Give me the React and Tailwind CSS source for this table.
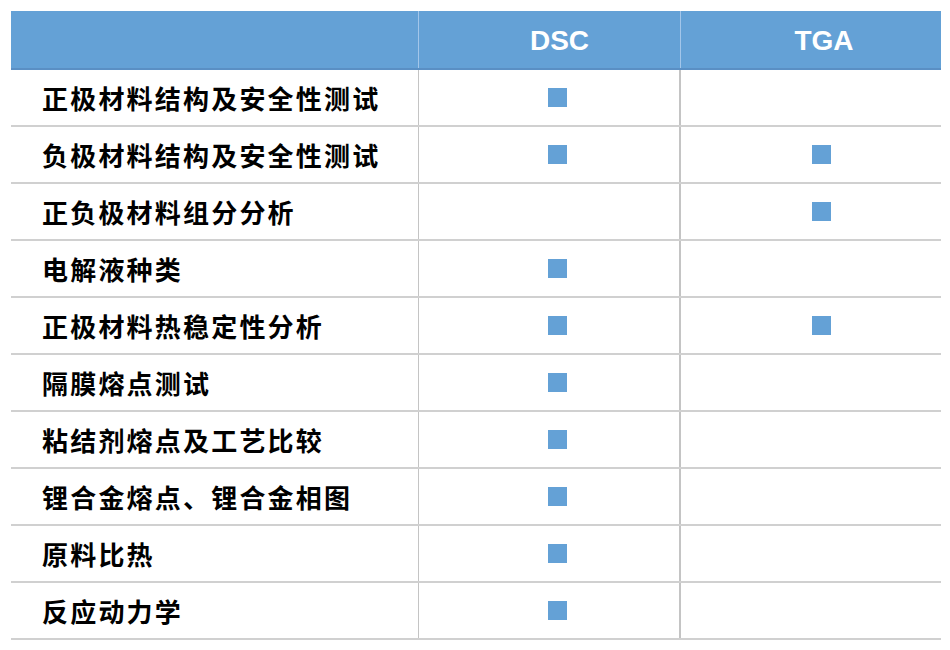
import React from "react";

const rows = [
  ["正极材料结构及安全性测试", true, false],
  ["负极材料结构及安全性测试", true, true],
  ["正负极材料组分分析", false, true],
  ["电解液种类", true, false],
  ["正极材料热稳定性分析", true, true],
  ["隔膜熔点测试", true, false],
  ["粘结剂熔点及工艺比较", true, false],
  ["锂合金熔点、锂合金相图", true, false],
  ["原料比热", true, false],
  ["反应动力学", true, false],
];

function Mark({ on }) {
  return on ? <div className="w-[19px] h-[19px] bg-[#64a1d6]" /> : null;
}

export default function App() {
  return (
    <div className="w-[950px] h-[650px] bg-white pt-[11px] pl-[11px]" style={{ fontFamily: '"Noto Sans CJK SC", "Liberation Sans", sans-serif' }}>
      <div className="w-[930px]">
        <div className="flex h-[59px] bg-[#64a1d6] border-b-2 border-[#5a8fc4]">
          <div className="w-[408px] border-r border-[#a3c6ea]" />
          <div className="w-[262px] border-r border-[#a3c6ea] flex items-center justify-center pl-[20px] pt-[3px] text-white font-bold text-[28px]" style={{ fontFamily: '"Liberation Sans", Arial, sans-serif' }}>DSC</div>
          <div className="flex-1 flex items-center justify-center pl-[26px] pt-[3px] text-white font-bold text-[28px]" style={{ fontFamily: '"Liberation Sans", Arial, sans-serif' }}>TGA</div>
        </div>
        {rows.map(([label, a, b], i) => (
          <div key={i} className="flex h-[57px] border-b-2 border-[#d0d0d0]">
            <div className="w-[408px] border-r border-[#c4c4c4] flex items-center pl-[31px] text-[26px] font-bold text-black tracking-[2.2px]">{label}</div>
            <div className="w-[262px] border-r-2 border-[#c4c4c4] flex items-center justify-center pl-[16px]"><Mark on={a} /></div>
            <div className="flex-1 flex items-center justify-center pl-[20px]"><Mark on={b} /></div>
          </div>
        ))}
      </div>
    </div>
  );
}
